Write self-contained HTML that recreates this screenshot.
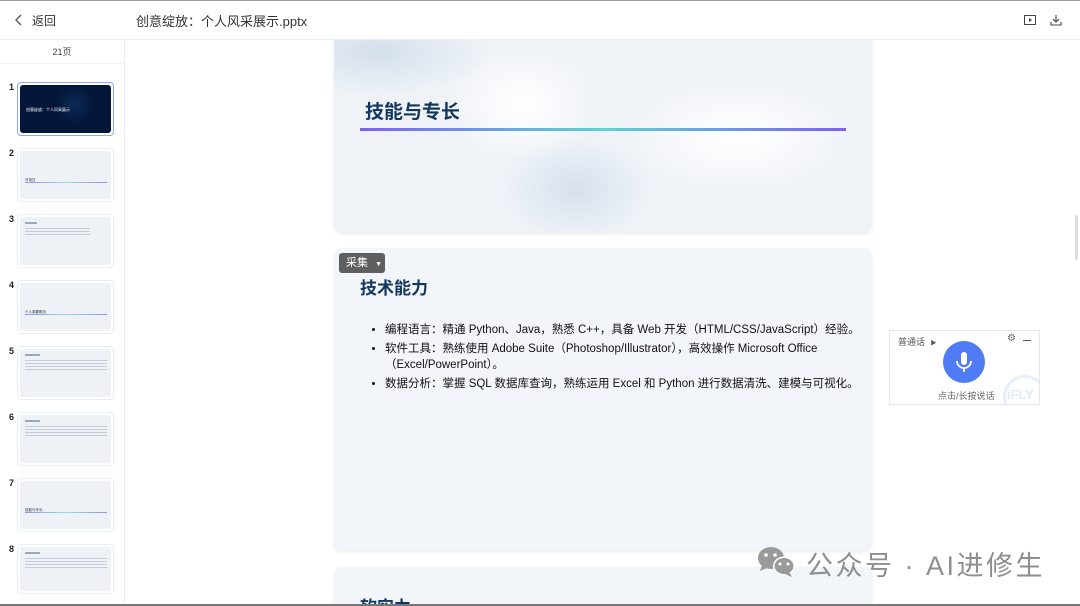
<!DOCTYPE html>
<html><head><meta charset="utf-8"><style>
*{margin:0;padding:0;box-sizing:border-box}
html{width:1080px;height:606px;overflow:hidden}
body{width:1080px;height:606px;overflow:hidden;background:#fff;font-family:"Liberation Sans","Noto Sans CJK SC",sans-serif;position:relative;color:#333}
.topl{position:absolute;left:0;top:0;width:1080px;height:1px;background:#999;z-index:5}
.botl{position:absolute;left:0;top:604px;width:1080px;height:2px;background:#777;z-index:5}
.hdr{position:absolute;top:1px;left:0;width:1080px;height:39px;border-bottom:1px solid #eef0f4;background:#fff;z-index:4}
.side{position:absolute;top:40px;left:0;width:125px;height:564px;border-right:1px solid #e8eef8}
.pg{position:absolute;top:40px;left:0;width:124px;height:24px;border-bottom:1px solid #eef1f6;font-size:9px;text-align:center;line-height:24px;color:#444}
.num{position:absolute;left:9px;font-size:9px;font-weight:bold;color:#222}
.th{position:absolute;left:17px;width:97px;height:54px;border:1px solid #e6eefa;border-radius:4px;padding:2px}
.th .in{width:100%;height:100%;border-radius:3px;background:#eef2f7;position:relative;overflow:hidden}
.th.sel{border-color:#8fa9f0}
.wave{background:radial-gradient(ellipse 40% 60% at 20% 20%,#fff 0,transparent 70%),radial-gradient(ellipse 40% 50% at 80% 90%,#fff 0,transparent 70%),#e9eef5}
.card{position:absolute;left:334px;width:538px;background:#f2f5f9;border-radius:8px;box-shadow:0 2px 4px rgba(0,0,0,.08);overflow:hidden}
li{margin-bottom:3px}
</style></head><body>
<div class="topl"></div>
<div class="hdr">
<svg style="position:absolute;left:15px;top:13px" width="8" height="12" viewBox="0 0 8 12"><path d="M6 1L1 6l5 5" fill="none" stroke="#555" stroke-width="1.3"/></svg>
<div style="position:absolute;left:32px;top:11px;font-size:12px;color:#333">返回</div>
<div style="position:absolute;left:136px;top:10px;font-size:13px;color:#333">创意绽放：个人风采展示.pptx</div>
<svg style="position:absolute;left:1024px;top:14px" width="12" height="10" viewBox="0 0 12 10"><rect x=".5" y=".5" width="11" height="9" fill="none" stroke="#444"/><path d="M5 3v4l3-2z" fill="#444"/></svg>
<svg style="position:absolute;left:1050px;top:13px" width="12" height="12" viewBox="0 0 12 12"><path d="M6 1v7M3 5l3 3 3-3M1 8v3h10V8" fill="none" stroke="#444" stroke-width="1.1"/></svg>
</div>
<div class="side"></div>
<div class="pg">21页</div>

<div class="num" style="top:82px">1</div>
<div class="th sel" style="top:82px"><div class="in" style="background:radial-gradient(ellipse 30% 60% at 60% 40%,#0b2a55,transparent 70%),#04163a"><div style="position:absolute;left:6px;top:22px;font-size:4px;color:#fff">创意绽放：个人风采展示</div></div></div>
<div class="num" style="top:148px">2</div>
<div class="th" style="top:148px"><div class="in wave"><div style="position:absolute;left:5px;top:27px;font-size:3.5px;color:#234">开场白</div><div style="position:absolute;left:5px;top:31px;width:82px;height:1px;background:linear-gradient(90deg,#9a8ef0,#8ee0e0,#9a8ef0)"></div></div></div>
<div class="num" style="top:214px">3</div>
<div class="th" style="top:214px"><div class="in"><div style="position:absolute;left:5px;top:5px;width:12px;height:2px;background:#9ab"></div><div style="position:absolute;left:5px;top:11px;width:65px;height:8px;background:repeating-linear-gradient(#c4ccd6 0 1px,transparent 1px 3px)"></div></div></div>
<div class="num" style="top:280px">4</div>
<div class="th" style="top:280px"><div class="in wave"><div style="position:absolute;left:5px;top:27px;font-size:3.5px;color:#234">个人简要概览</div><div style="position:absolute;left:5px;top:31px;width:82px;height:1px;background:linear-gradient(90deg,#9a8ef0,#8ee0e0,#9a8ef0)"></div></div></div>
<div class="num" style="top:346px">5</div>
<div class="th" style="top:346px"><div class="in"><div style="position:absolute;left:5px;top:5px;width:15px;height:2px;background:#9ab"></div><div style="position:absolute;left:5px;top:11px;width:82px;height:12px;background:repeating-linear-gradient(#c4ccd6 0 1px,transparent 1px 3px)"></div></div></div>
<div class="num" style="top:412px">6</div>
<div class="th" style="top:412px"><div class="in"><div style="position:absolute;left:5px;top:5px;width:15px;height:2px;background:#9ab"></div><div style="position:absolute;left:5px;top:11px;width:82px;height:10px;background:repeating-linear-gradient(#c4ccd6 0 1px,transparent 1px 3px)"></div></div></div>
<div class="num" style="top:478px">7</div>
<div class="th" style="top:478px"><div class="in wave"><div style="position:absolute;left:5px;top:27px;font-size:3.5px;color:#234">技能与专长</div><div style="position:absolute;left:5px;top:31px;width:82px;height:1px;background:linear-gradient(90deg,#9a8ef0,#8ee0e0,#9a8ef0)"></div></div></div>
<div class="num" style="top:544px">8</div>
<div class="th" style="top:544px;height:50px"><div class="in"><div style="position:absolute;left:5px;top:5px;width:15px;height:2px;background:#9ab"></div><div style="position:absolute;left:5px;top:11px;width:82px;height:10px;background:repeating-linear-gradient(#c4ccd6 0 1px,transparent 1px 3px)"></div></div></div>

<div class="card" style="top:20px;height:212px;background:radial-gradient(ellipse 30% 30% at 8% 15%,#d4dfec,transparent 70%),radial-gradient(ellipse 20% 35% at 45% 80%,#d6e0ed,transparent 70%),radial-gradient(ellipse 30% 40% at 75% 55%,#fff,transparent 70%),radial-gradient(ellipse 20% 40% at 35% 40%,#fff,transparent 70%),#eff3f8">
<div style="position:absolute;left:31px;top:77px;font-size:19px;font-weight:bold;color:#12385e">技能与专长</div>
<div style="position:absolute;left:26px;top:108px;width:486px;height:3px;background:linear-gradient(90deg,#7d60f0,#5fd3d0 50%,#7d60f0)"></div>
</div>

<div class="card" style="top:248px;height:302px">
<div style="position:absolute;left:26px;top:26px;font-size:17px;font-weight:bold;color:#12385e">技术能力</div>
<ul style="position:absolute;left:51px;top:74px;font-size:11.5px;color:#111;line-height:16px;width:480px">
<li>编程语言：精通 Python、Java，熟悉 C++，具备 Web 开发（HTML/CSS/JavaScript）经验。</li>
<li>软件工具：熟练使用 Adobe Suite（Photoshop/Illustrator），高效操作 Microsoft Office（Excel/PowerPoint）。</li>
<li>数据分析：掌握 SQL 数据库查询，熟练运用 Excel 和 Python 进行数据清洗、建模与可视化。</li>
</ul>
</div>
<div style="position:absolute;left:339px;top:253px;width:46px;height:20px;background:#5f5f5f;border-radius:3px;color:#fff;font-size:11px;line-height:20px;padding-left:7px">采集 <span style="font-size:7px;margin-left:4px">▼</span></div>

<div class="card" style="top:567px;height:60px">
<div style="position:absolute;left:26px;top:26px;font-size:17px;font-weight:bold;color:#12385e">软实力</div>
</div>

<div style="position:absolute;left:1075px;top:215px;width:3px;height:45px;background:#ddd;border-radius:2px"></div>

<div style="position:absolute;left:889px;top:330px;width:151px;height:75px;border:1px solid #e4e6ea;background:#fff;overflow:hidden">
<div style="position:absolute;left:8px;top:4px;font-size:9px;color:#555">普通话 <span style="font-size:6px;margin-left:3px">▶</span></div>
<div style="position:absolute;left:117px;top:2px;font-size:10px;color:#666">⚙</div>
<div style="position:absolute;left:133px;top:9px;width:8px;height:1px;background:#555"></div>
<div style="position:absolute;left:53px;top:10px;width:42px;height:42px;border-radius:50%;background:#4f7cf5">
<svg width="42" height="42" viewBox="0 0 42 42"><rect x="18" y="11" width="6" height="13" rx="3" fill="#fff"/><path d="M14 20a7 7 0 0 0 14 0M21 27v4" fill="none" stroke="#fff" stroke-width="1.8"/></svg></div>
<div style="position:absolute;left:48px;top:58px;font-size:9px;color:#666">点击/长按说话</div>
<div style="position:absolute;left:113px;top:44px;width:44px;height:44px;border-radius:50%;border:3px solid #e8eefa"></div>
<div style="position:absolute;left:117px;top:56px;font-size:13px;font-weight:bold;color:#e2eaf8">iFLY</div>
</div>

<svg style="position:absolute;left:756px;top:545px" width="42" height="34" viewBox="0 0 42 34"><ellipse cx="15" cy="13" rx="13" ry="11" fill="#9a9a9a"/><path d="M6 20l-2 6 7-3z" fill="#9a9a9a"/><ellipse cx="28" cy="21" rx="11" ry="9.5" fill="#fff"/><ellipse cx="28" cy="21" rx="9.5" ry="8" fill="#9a9a9a"/><path d="M33 27l3 5-7-3z" fill="#9a9a9a"/><circle cx="10" cy="10" r="1.8" fill="#fff"/><circle cx="19" cy="10" r="1.8" fill="#fff"/><circle cx="24" cy="19" r="1.5" fill="#fff"/><circle cx="32" cy="19" r="1.5" fill="#fff"/></svg>
<div style="position:absolute;left:806px;top:544px;font-size:27px;color:#8e8e8e;letter-spacing:2.5px;white-space:nowrap">公众号 · AI进修生</div>
<div class="botl"></div>
</body></html>
